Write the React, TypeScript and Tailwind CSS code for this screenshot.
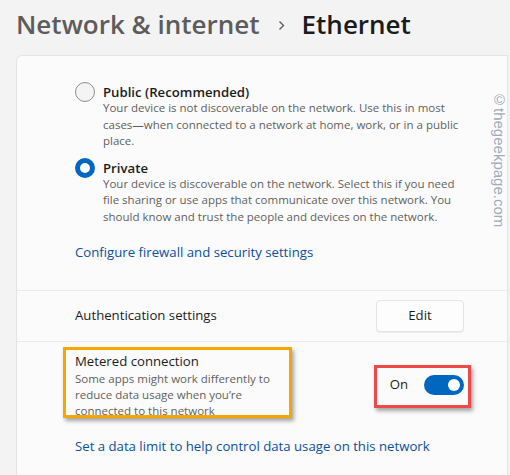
import React from 'react'

const font = { fontFamily: '"Open Sans", "Noto Sans", sans-serif' }

const Radio = ({ checked }: { checked?: boolean }) => {
  if (checked) {
    return <div className="w-5 h-5 shrink-0 rounded-full border-[5px] border-[#0067c0] bg-white" />
  }
  return <div className="w-5 h-5 shrink-0 rounded-full border border-[#8d8d8d] bg-[#f4f4f4]" />
}

const Toggle = () => (
  <div className="w-10 h-5 rounded-full bg-[#0067c0] flex items-center justify-end pr-1">
    <div className="w-3 h-3 rounded-full bg-white" />
  </div>
)

const App = () => {
  return (
    <div className="relative w-[510px] h-[475px] overflow-hidden bg-[#f3f3f3] text-[#1b1b1b]" style={font}>
      <div className="h-[55px] pl-4 pt-[6px] flex items-start">
        <span className="text-[26px] leading-9 font-semibold text-[#5c5c5c]">Network &amp; internet</span>
        <svg className="ml-[18px] mr-[17px] mt-[14px]" width="7" height="11" viewBox="0 0 7 11">
          <path d="M1.5 1.5 L5.5 5.5 L1.5 9.5" fill="none" stroke="#5c5c5c" strokeWidth="1.4" />
        </svg>
        <span className="text-[26px] leading-9 font-semibold text-[#1b1b1b]">Ethernet</span>
      </div>

      <div className="ml-4 mr-[2px] h-[420px] bg-[#fbfbfb] border-l border-t border-r border-[#e5e5e5] rounded-tl-[6px]">
        <div className="pl-[58px] pt-[26px] pb-[28px]">
          <div className="flex gap-2">
            <Radio />
            <div className="w-[358px]">
              <div className="text-[13.2px] leading-5 font-semibold">Public (Recommended)</div>
              <div className="-mt-[2px] text-[11.5px] leading-[16.5px] text-[#5f5f5f]">
                Your device is not discoverable on the network. Use this in most cases—when connected to a network at
                home, work, or in a public place.
              </div>
            </div>
          </div>
          <div className="flex gap-2 mt-2">
            <Radio checked />
            <div className="w-[358px]">
              <div className="text-[13.2px] leading-5 font-semibold">Private</div>
              <div className="-mt-[2px] text-[11.5px] leading-[16.5px] text-[#5f5f5f]">
                Your device is discoverable on the network. Select this if you need file sharing or use apps that
                communicate over this network. You should know and trust the people and devices on the network.
              </div>
            </div>
          </div>
          <div className="mt-[17px] text-[13.2px] leading-5 text-[#0b4f9c]">Configure firewall and security settings</div>
        </div>

        <div className="h-[51px] border-t border-[#ebebeb] pl-[58px] pr-[43px] flex items-center justify-between">
          <span className="text-[13.2px]">Authentication settings</span>
          <button className="w-[88px] h-8 rounded-[4px] border border-[#e5e5e5] bg-[#fdfdfd] text-[13.2px] shadow-[0_1px_0_rgba(0,0,0,0.06)]">
            Edit
          </button>
        </div>

        <div className="border-t border-[#ebebeb] pl-[58px] pr-[43px] pt-[9px]">
          <div className="flex items-center justify-between">
            <div className="relative w-[216px]">
              <div className="text-[13.2px] leading-5">Metered connection</div>
              <div className="text-[11.5px] leading-4 text-[#5f5f5f]">
                Some apps might work differently to reduce data usage when you’re connected to this network
              </div>
              <div className="absolute -left-3 -right-px -top-1 bottom-[1px] border-[3px] border-[#f7a600] shadow-[2px_3px_4px_rgba(0,0,0,0.35)]" />
            </div>
            <div className="relative flex items-center gap-4 h-5">
              <span className="text-[13.2px]">On</span>
              <Toggle />
              <div className="absolute -left-4 -right-[7px] -top-[10px] -bottom-[13px] border-[3px] border-[#ef4848] shadow-[2px_3px_4px_rgba(0,0,0,0.35)]" />
            </div>
          </div>
          <div className="mt-[17px] text-[13.2px] leading-5 text-[#0b4f9c]">
            Set a data limit to help control data usage on this network
          </div>
        </div>
      </div>

      <div
        className="absolute left-[489px] top-[91px] text-[15px] leading-5 text-[#a3aab8] [writing-mode:vertical-rl]"
        style={{ fontFamily: '"Liberation Sans", Arial, sans-serif' }}
      >
        ©thegeekpage.com
      </div>
    </div>
  )
}

export default App
